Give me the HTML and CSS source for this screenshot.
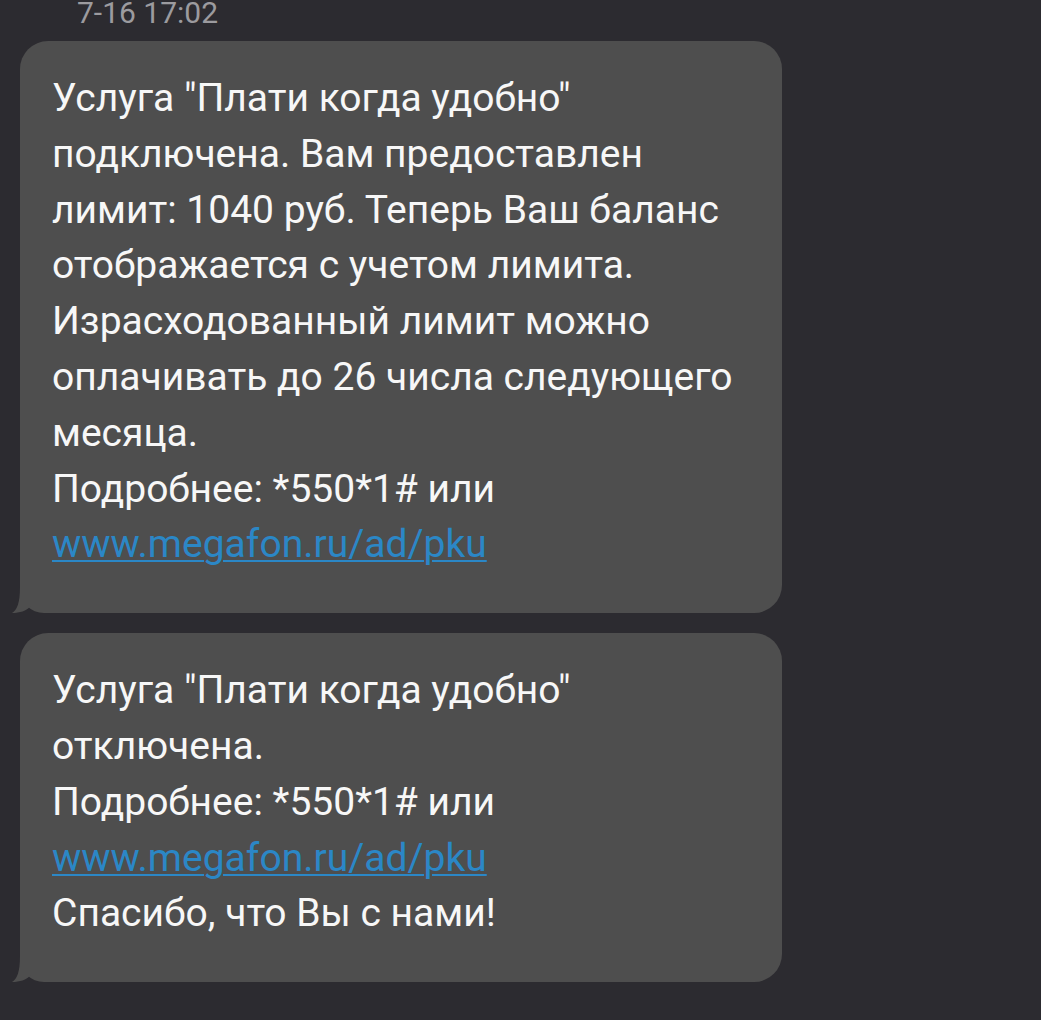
FILE: index.html
```html
<!DOCTYPE html>
<html lang="ru">
<head>
<meta charset="utf-8">
<link rel="stylesheet" href="styles.css">
</head>
<body>
<div class="thread">
  <div class="time">7-16 17:02</div>
  <div class="bubble">
    <svg class="tail" width="30" height="40" viewBox="0 0 30 40"><path d="M8,0 L8,14 C8,30 5,37 0,40 C8,40 14,38 19,33 L19,0 Z"/></svg>
    <p class="msg">Услуга "Плати когда удобно"<br>подключена. Вам предоставлен<br>лимит: 1040 руб. Теперь Ваш баланс<br>отображается с учетом лимита.<br>Израсходованный лимит можно<br>оплачивать до 26 числа следующего<br>месяца.<br>Подробнее: *550*1# или<br><a class="link" href="#">www.megafon.ru/ad/pku</a></p>
  </div>
  <div class="bubble">
    <svg class="tail" width="30" height="40" viewBox="0 0 30 40"><path d="M8,0 L8,14 C8,30 5,37 0,40 C8,40 14,38 19,33 L19,0 Z"/></svg>
    <p class="msg">Услуга "Плати когда удобно"<br>отключена.<br>Подробнее: *550*1# или<br><a class="link" href="#">www.megafon.ru/ad/pku</a><br>Спасибо, что Вы с нами!</p>
  </div>
</div>
</body>
</html>
```
FILE: styles.css
```css
html, body {
  margin: 0;
  padding: 0;
  background: #2c2b30;
}
body {
  font-family: Roboto, "Noto Sans", sans-serif;
  width: 1041px;
  height: 1020px;
  overflow: hidden;
}
.thread {
  display: flex;
  flex-direction: column;
  gap: 20px;
  padding-left: 20px;
}
.time {
  color: #9c9b9f;
  font-size: 30px;
  line-height: 26px;
  height: 21px;
  padding-left: 57px;
}
.bubble {
  position: relative;
  width: 762px;
  box-sizing: border-box;
  background: #4e4e4e;
  border-radius: 28px 28px 28px 24px;
  padding: 30px 32px 40px 32px;
}
.tail {
  position: absolute;
  left: -8px;
  bottom: 0;
  fill: #4e4e4e;
}
.msg {
  margin: 0;
  color: #f7f7f7;
  font-size: 39px;
  line-height: 55.8px;
  white-space: nowrap;
}
.link {
  color: #2b87c6;
  text-decoration: underline;
  text-decoration-thickness: 2px;
  text-underline-offset: 3px;
}
```
